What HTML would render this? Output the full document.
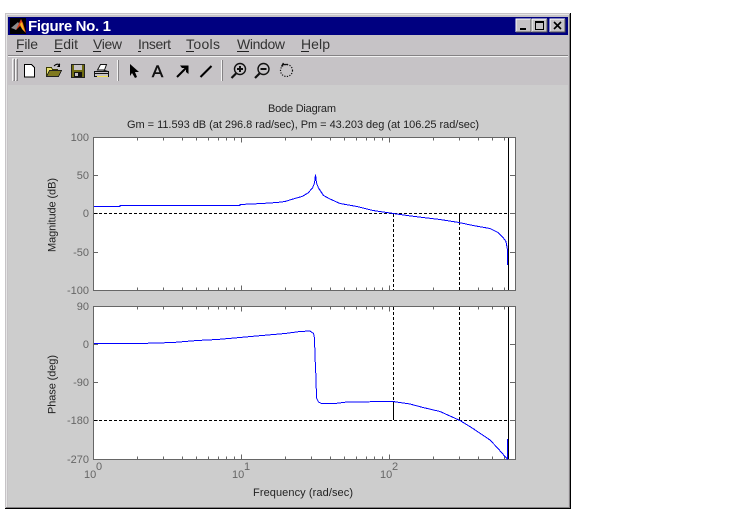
<!DOCTYPE html>
<html><head><meta charset="utf-8"><style>
html,body{margin:0;padding:0;background:#fff;width:750px;height:518px;overflow:hidden}
svg{display:block}
text{font-family:"Liberation Sans",Arial,sans-serif}
.t{font-size:11px;fill:#666;text-anchor:end}
.l{font-size:11px;fill:#222}
.m{font-size:14px;fill:#333}
</style></head><body>
<svg width="750" height="518" viewBox="0 0 750 518" xmlns="http://www.w3.org/2000/svg">
<rect width="750" height="518" fill="#fff"/>
<!-- window frame -->
<rect x="5" y="13" width="566" height="496" fill="#c6c3c6"/>
<g shape-rendering="crispEdges">
<rect x="5" y="13" width="565" height="1" fill="#c6c3c6"/>
<rect x="5" y="14" width="565" height="1" fill="#e6e6e6"/>
<rect x="5" y="13" width="1" height="495" fill="#c6c3c6"/>
<rect x="6" y="14" width="1" height="494" fill="#e6e6e6"/>
<rect x="570" y="13" width="1" height="496" fill="#000"/>
<rect x="5" y="508" width="566" height="1" fill="#000"/>
<rect x="569" y="14" width="1" height="494" fill="#848284"/>
<rect x="6" y="507" width="564" height="1" fill="#848284"/>
<!-- title -->
<rect x="8" y="17" width="560" height="18" fill="#000080"/>
<!-- menu rule -->
<rect x="8" y="55" width="560" height="1" fill="#848284"/>
<rect x="8" y="56" width="560" height="1" fill="#f2f2f2"/>
<!-- figure -->
<rect x="8" y="85" width="560" height="422" fill="#cdcdcd"/>
</g>
<!-- matlab logo -->
<rect x="10" y="18" width="16" height="16" fill="#000"/>
<path d="M11 28l7-6 2 3-4 5-2-1z" fill="#8c8c8c"/>
<path d="M16 30l5-11 2 4 3 10-3-3-3-4z" fill="#d8401a"/>
<path d="M20 24l2-2 2 7 1 3-3-3z" fill="#f4b820"/>
<text x="28" y="31" font-size="15" font-weight="700" fill="#fff" textLength="83" lengthAdjust="spacing">Figure No. 1</text>
<!-- window buttons -->
<g shape-rendering="crispEdges">
<rect x="516" y="19" width="15" height="13" fill="#c6c3c6" stroke="none"/>
<path d="M516 32V19H531" stroke="#fff" fill="none"/><path d="M516 32H531V19" stroke="#555" fill="none"/>
<rect x="520" y="28" width="6" height="2" fill="#000"/>
<rect x="532" y="19" width="15" height="13" fill="#c6c3c6"/>
<path d="M532 32V19H547" stroke="#fff" fill="none"/><path d="M532 32H547V19" stroke="#555" fill="none"/>
<rect x="535.5" y="21.5" width="8" height="8" fill="none" stroke="#000"/><rect x="535" y="21" width="9" height="2" fill="#000"/>
<rect x="550" y="19" width="15" height="13" fill="#c6c3c6"/>
<path d="M550 32V19H565" stroke="#fff" fill="none"/><path d="M550 32H565V19" stroke="#555" fill="none"/>
</g>
<path d="M554 22l7 7M561 22l-7 7" stroke="#000" stroke-width="1.6" fill="none"/>
<!-- menu -->
<text class="m" x="16" y="49" textLength="22">File</text>
<text class="m" x="54" y="49" textLength="24">Edit</text>
<text class="m" x="93" y="49" textLength="29">View</text>
<text class="m" x="138" y="49" textLength="33">Insert</text>
<text class="m" x="186" y="49" textLength="34">Tools</text>
<text class="m" x="237" y="49" textLength="48">Window</text>
<text class="m" x="301" y="49" textLength="29">Help</text>
<g fill="#222" shape-rendering="crispEdges">
<rect x="16" y="51" width="7" height="1"/><rect x="54" y="51" width="7" height="1"/><rect x="93" y="51" width="8" height="1"/><rect x="138" y="51" width="3" height="1"/><rect x="186" y="51" width="8" height="1"/><rect x="237" y="51" width="12" height="1"/><rect x="301" y="51" width="8" height="1"/>
</g>
<!-- toolbar -->
<g shape-rendering="crispEdges">
<path d="M12.5 81V59H14" stroke="#f4f4f4" fill="none"/><path d="M13.5 80.5H14.5V59" stroke="#848284" fill="none"/>
<path d="M15.5 81V59H17" stroke="#f4f4f4" fill="none"/><path d="M16.5 80.5H17.5V59" stroke="#848284" fill="none"/>
<rect x="117" y="60" width="1" height="21" fill="#f4f4f4"/><rect x="118" y="60" width="1" height="21" fill="#848284"/>
<rect x="221" y="60" width="1" height="21" fill="#f4f4f4"/><rect x="222" y="60" width="1" height="21" fill="#848284"/>
</g>
<!-- new -->
<path d="M24.5 64.5h7l3 3v9.5h-10z" fill="#fff" stroke="#000" shape-rendering="crispEdges"/>
<!-- open -->
<path d="M46.5 67.5h5l1 2h5v7h-11z" fill="#e8e070" stroke="#3a3a00" shape-rendering="crispEdges"/>
<path d="M46.5 76.5l3-6h12l-3 6z" fill="#807a20" stroke="#222" shape-rendering="crispEdges"/>
<path d="M54 66q3-3 6-1" stroke="#000" fill="none"/><path d="M60 63v4h-3z" fill="#000"/>
<!-- save -->
<rect x="71.5" y="64.5" width="13" height="13" fill="#6e6a10" stroke="#222" shape-rendering="crispEdges"/>
<rect x="74" y="65" width="8" height="5" fill="#c6c3c6" shape-rendering="crispEdges"/>
<rect x="74" y="72" width="8" height="5" fill="#111" shape-rendering="crispEdges"/><rect x="75" y="73" width="3" height="3" fill="#c6c3c6" shape-rendering="crispEdges"/>
<!-- print -->
<path d="M97.5 70l3-5.5h6l-2 5.500z" fill="#fff" stroke="#111"/>
<path d="M94.5 71.5h14v5h-14z" fill="#c6c3c6" stroke="#111" shape-rendering="crispEdges"/>
<rect x="95" y="73" width="13" height="1" fill="#111" shape-rendering="crispEdges"/>
<path d="M97 76.5h11" stroke="#f4e050" shape-rendering="crispEdges"/>
<path d="M103 70l5 1.5" stroke="#111"/>
<!-- pointer -->
<path d="M130 64l9 8h-4l2 5-2 1-3-5-2 3z" fill="#000"/>
<!-- A -->
<text x="157.5" y="77" font-size="17" fill="#111" stroke="#111" stroke-width=".5" text-anchor="middle">A</text>
<!-- arrow -->
<path d="M177 77l10-10" stroke="#000" stroke-width="2" fill="none"/><path d="M180 65.5h8.5v8.5l-2.500-2v-4h-4z" fill="#000"/>
<!-- line -->
<path d="M200.5 77l11-11" stroke="#000" stroke-width="2" fill="none"/>
<!-- zoom in/out -->
<g fill="none" stroke="#111">
<circle cx="240" cy="69" r="5.5" stroke-width="1.4"/><path d="M236 73.5l-4.5 4.5" stroke-width="2.2"/>
<path d="M237 69h6M240 66v6" stroke-width="2"/>
<circle cx="263.5" cy="69" r="5.5" stroke-width="1.4"/><path d="M259.5 73.5l-4.5 4.500" stroke-width="2.2"/>
<path d="M260.5 69h6" stroke-width="2"/>
<circle cx="286.5" cy="70.5" r="6" stroke-width="1.2" stroke-dasharray="1.2 1.4"/>
<path d="M283 64.5h5" stroke-width="1.3"/><path d="M281.500 66.500l2-3.500" stroke-width="1.3"/>
</g>
<!-- axes -->
<rect x="93.5" y="137.5" width="422" height="153" fill="#fff" stroke="#666" shape-rendering="crispEdges"/>
<rect x="93.5" y="306.5" width="422" height="153" fill="#fff" stroke="#666" shape-rendering="crispEdges"/>
<defs>
<path id="tk" d="M137.5 0v3M163.5 0v3M182.5 0v3M196.5 0v3M208.5 0v3M218.5 0v3M226.5 0v3M234.5 0v3M241.5 0v5M285.5 0v3M311.5 0v3M330.5 0v3M344.5 0v3M356.5 0v3M366.5 0v3M374.5 0v3M382.5 0v3M389.5 0v5M433.5 0v3M459.5 0v3M478.5 0v3M492.5 0v3M504.5 0v3" stroke="#666" fill="none"/>
</defs>
<g shape-rendering="crispEdges">
<use href="#tk" transform="translate(0,137.5)"/>
<use href="#tk" transform="translate(0,290.5) scale(1,-1)"/>
<use href="#tk" transform="translate(0,306.5)"/>
<use href="#tk" transform="translate(0,459.5) scale(1,-1)"/>
<path d="M93 175.5h5M93 213.5h5M93 252.5h5M510 175.5h5M510 213.5h5M510 252.5h5M93 344.5h5M93 382.5h5M93 420.5h5M510 344.5h5M510 382.5h5M510 420.5h5" stroke="#666" fill="none"/>
<!-- margin lines -->
<g stroke="#000" fill="none">
<path d="M94 213.5H508" stroke-dasharray="3 2"/>
<path d="M393.5 214V290" stroke-dasharray="3 2"/>
<path d="M459.5 222V290" stroke-dasharray="3 2"/>
<path d="M459.5 213V222"/>
<path d="M508.5 138V290"/>
<path d="M94 420.5H508" stroke-dasharray="3 2"/>
<path d="M393.5 307V401" stroke-dasharray="3 2"/>
<path d="M459.5 307V420" stroke-dasharray="3 2"/>
<path d="M393.5 401V420"/>
<path d="M508.5 307V459"/>
</g>
<!-- curves -->
<g stroke="#0000ff" fill="none">
<path d="M94 206.5H120V205.5H240V204.5L262 203.5 277 202.5 285 201.5 293 199 302 196.5 308 193 312.5 188 314.5 183 315.5 174.5 316.5 183 318.5 188 323.5 195.5 330 199 340 203.5 357 206.5 373 210.5 390 213 407 215.5 423 217.5 440 219.5 459 222.5 473 225.5 490 228.5 498 232.5 503 237.5 506 241.5 507.5 250 507.5 265"/>
<path d="M94 343.5H140L173 342.5 197 340.5 217 339.5 240 337.5 262 335.5 285 333.5 300 331.5 310 331 313.5 333.5 314.5 338 315 356.5 316 378.5 316.5 398 318.5 402 321.5 403.5H335L347 402 393 401.5 410 404 423 407.5 440 411.5 460 420.5 473 428.500 490 440 498 448.500 505 456.500 507.5 459V439"/>
</g>
</g>
<!-- labels -->
<text x="302" y="112" text-anchor="middle" font-size="11" fill="#222" textLength="68">Bode Diagram</text>
<text x="127" y="128" font-size="11" fill="#222" textLength="352">Gm = 11.593 dB (at 296.8 rad/sec),  Pm = 43.203 deg (at 106.25 rad/sec)</text>
<text class="t" x="89" y="141">100</text>
<text class="t" x="89" y="179">50</text>
<text class="t" x="89" y="217">0</text>
<text class="t" x="89" y="256">-50</text>
<text class="t" x="89" y="294">-100</text>
<text class="t" x="89" y="310">90</text>
<text class="t" x="89" y="348">0</text>
<text class="t" x="89" y="386">-90</text>
<text class="t" x="89" y="424">-180</text>
<text class="t" x="89" y="463">-270</text>
<text class="l" transform="translate(55.5,215) rotate(-90)" text-anchor="middle" textLength="74">Magnitude (dB)</text>
<text class="l" transform="translate(55.5,384.5) rotate(-90)" text-anchor="middle" textLength="59">Phase (deg)</text>
<text class="l" x="253" y="496" textLength="100">Frequency (rad/sec)</text>
<text class="t" style="text-anchor:start" x="84" y="478">10</text><text class="t" style="text-anchor:start" x="96" y="470">0</text>
<text class="t" style="text-anchor:start" x="232" y="478">10</text><text class="t" style="text-anchor:start" x="244" y="470">1</text>
<text class="t" style="text-anchor:start" x="380" y="478">10</text><text class="t" style="text-anchor:start" x="392" y="470">2</text>
</svg>
</body></html>
